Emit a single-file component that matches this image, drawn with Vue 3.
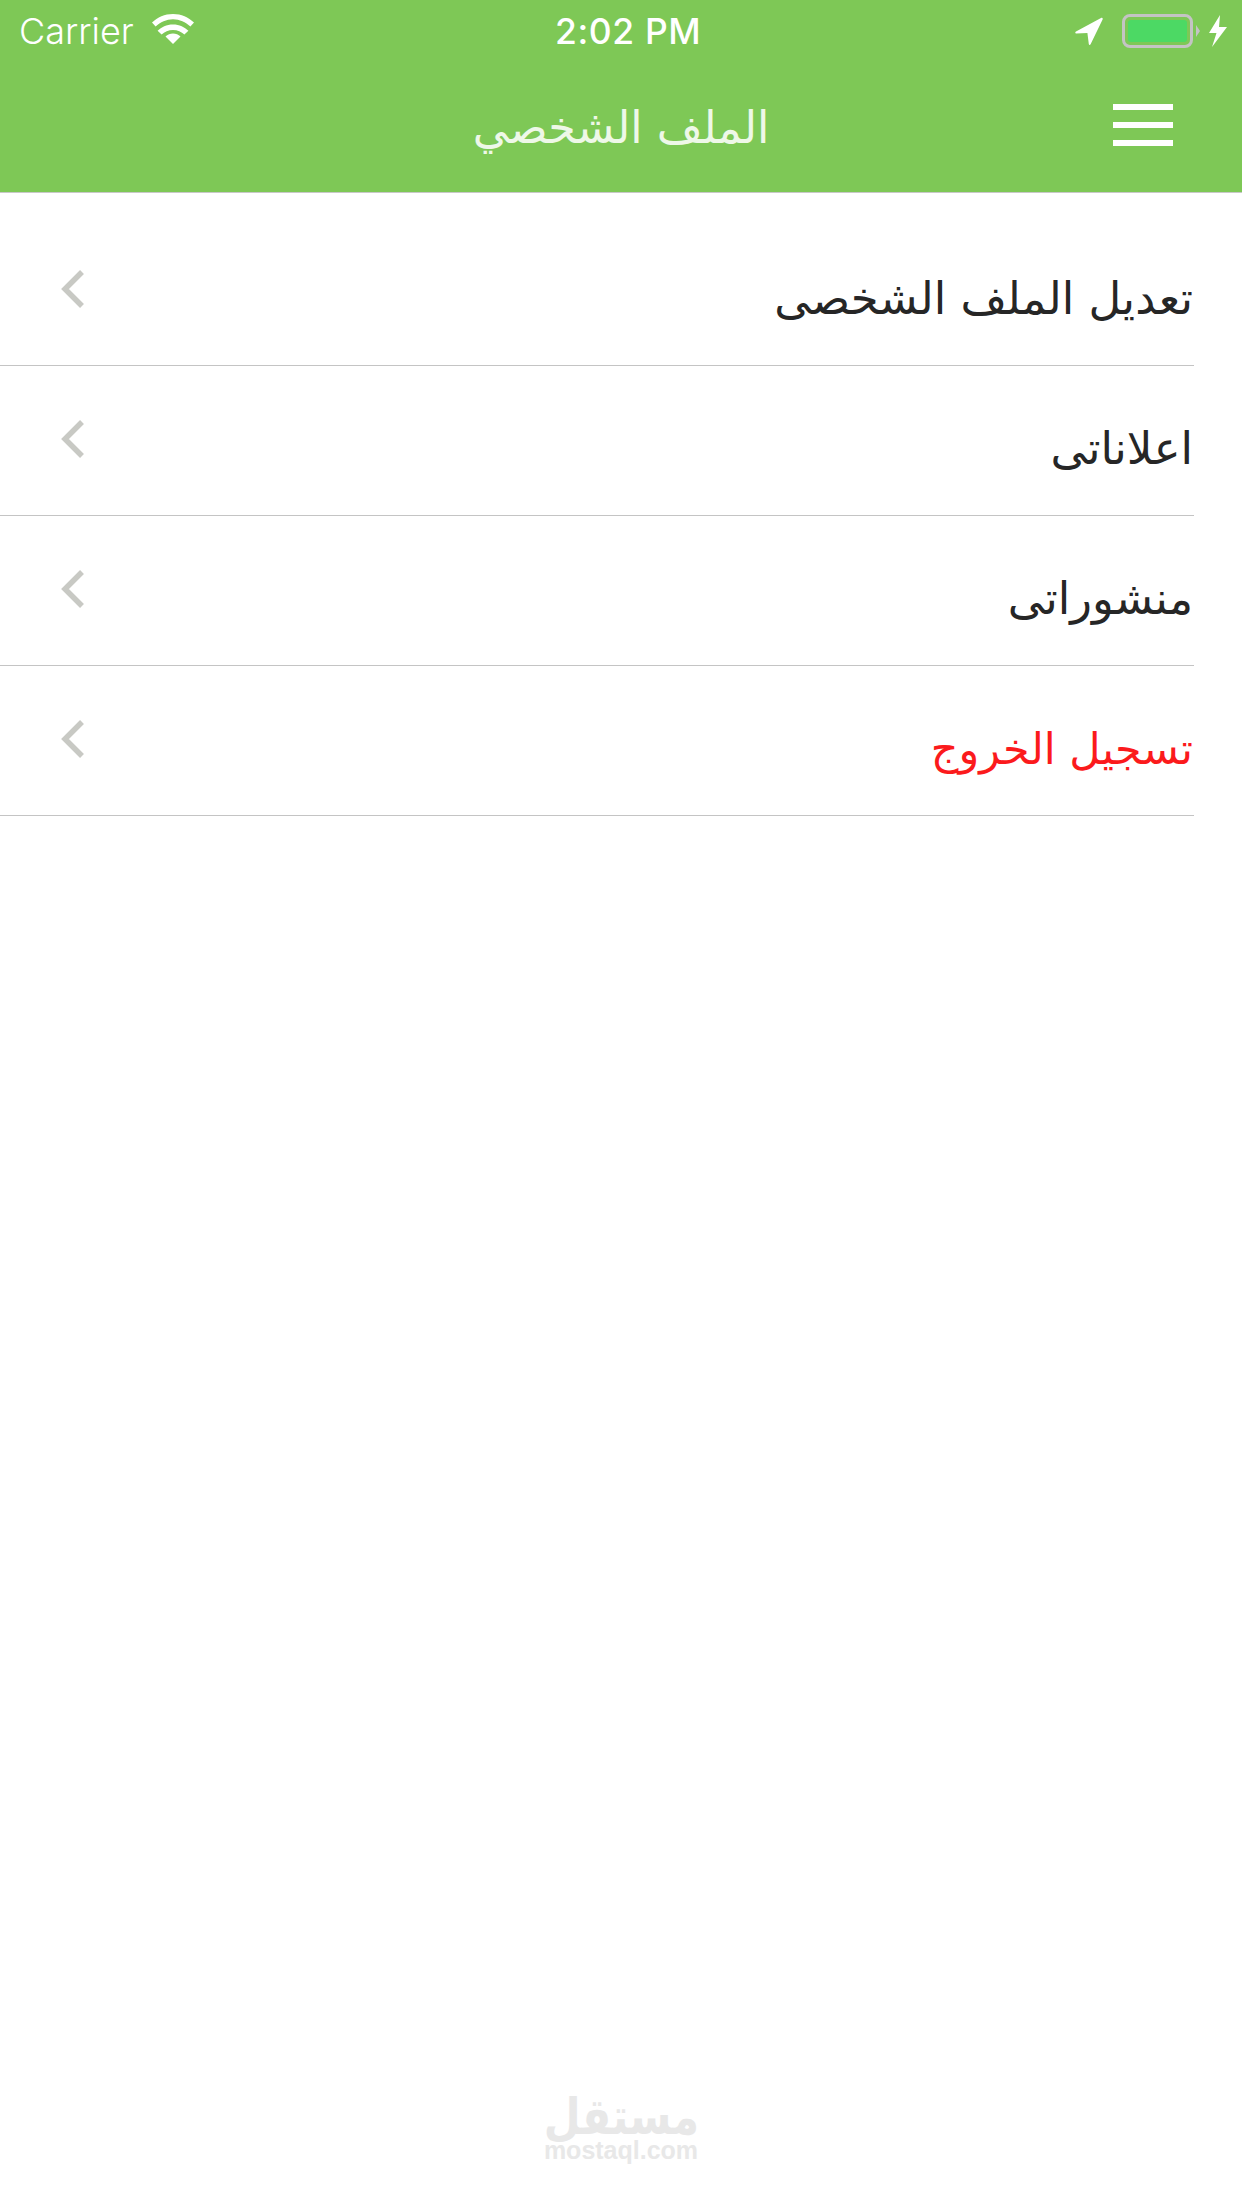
<script setup>
const rows = [
  { label: 'تعديل الملف الشخصى' },
  { label: 'اعلاناتى' },
  { label: 'منشوراتى' },
  { label: 'تسجيل الخروج', danger: true },
]
</script>

<template>
  <div class="screen">
    <header class="top">
      <div class="status">
        <div class="status-left">
          <span class="carrier">Carrier</span>
          <svg class="wifi" width="42" height="30" viewBox="0 0 42 30">
            <path d="M21 30 L13.5 22.5 C17.5 18.6 24.5 18.6 28.5 22.5 Z" fill="#fff" />
            <path d="M21 10.5 C14.4 10.5 9.6 13 5.6 16.8 L9.6 20.6 C12.6 17.8 16.4 16 21 16 C25.6 16 29.4 17.8 32.4 20.6 L36.4 16.8 C32.4 13 27.6 10.5 21 10.5 Z" fill="#fff" />
            <path d="M21 0 C12.6 0 5.6 3.2 0 8.6 L3.6 12.6 C8.4 8 14.4 5.2 21 5.2 C27.6 5.2 33.6 8 38.4 12.6 L42 8.6 C36.4 3.2 29.4 0 21 0 Z" fill="#fff" />
          </svg>
        </div>
        <span class="time">2:02 PM</span>
        <div class="status-right">
          <svg class="arrow" width="28" height="28" viewBox="0 0 28 28">
            <path d="M1 14.6 L26 1 C27.4 .4 28 1.2 27.6 2.6 L15.6 27.2 C15 28.2 14 28.2 13.8 27 L12.4 16 L1.2 16.6 C0 16.4 0 15.2 1 14.6 Z" fill="#fff" />
          </svg>
          <div class="battery">
            <div class="battery-fill"></div>
          </div>
          <span class="battery-tip"></span>
          <svg class="bolt" width="18" height="32" viewBox="0 0 18 32">
            <path d="M11 0 L0 18 L7.5 18 L3 32 L18 12 L10 12 Z" fill="#fff" />
          </svg>
        </div>
      </div>
      <div class="nav">
        <span class="title">الملف الشخصي</span>
        <div class="burger">
          <span></span>
          <span></span>
          <span></span>
        </div>
      </div>
    </header>

    <main class="list">
      <div v-for="row in rows" :key="row.label" class="row">
        <svg class="chevron" width="26" height="40" viewBox="0 0 26 40">
          <path d="M23 3 L6 20 L23 37" fill="none" stroke="#c8c9c4" stroke-width="5.5" />
        </svg>
        <span class="label" :class="{ danger: row.danger }" dir="rtl">{{ row.label }}</span>
      </div>
    </main>

    <footer class="mark">
      <span class="mark-ar" dir="rtl">مستقل</span>
      <span class="mark-en">mostaql.com</span>
    </footer>
  </div>
</template>

<style>
html,
body {
  margin: 0;
  background: #fff;
}
</style>

<style scoped>
.screen {
  width: 1242px;
  height: 2208px;
  display: flex;
  flex-direction: column;
  background: #fff;
  font-family: "DejaVu Sans", "Liberation Sans", sans-serif;
  overflow: hidden;
}

.top {
  height: 192px;
  background: #7ec856;
  border-bottom: 1px solid #c8c8c8;
  color: #fff;
}

.status {
  height: 62px;
  display: grid;
  grid-template-columns: 555px auto 1fr;
  align-items: center;
  font-family: Inter, Roboto, sans-serif;
}

.status-left {
  display: flex;
  align-items: center;
  padding-left: 19px;
}

.carrier {
  font-size: 36px;
  font-weight: 300;
}

.wifi {
  margin-left: 18px;
  margin-top: -4px;
}

.time {
  font-size: 35.5px;
  font-weight: 500;
  letter-spacing: .6px;
}

.status-right {
  display: flex;
  align-items: center;
  justify-content: flex-end;
  padding-right: 15px;
}

.arrow {
  margin-right: 19px;
}

.battery {
  width: 71px;
  height: 34px;
  box-sizing: border-box;
  border: 3px solid #c4c4c4;
  border-radius: 8px;
  padding: 3px;
}

.battery-fill {
  height: 100%;
  background: #4cd964;
  border-radius: 3px;
}

.battery-tip {
  width: 0;
  height: 0;
  margin-left: 3px;
  border-left: 4px solid #c4c4c4;
  border-top: 6px solid transparent;
  border-bottom: 6px solid transparent;
}

.bolt {
  margin-left: 9px;
}

.nav {
  height: 130px;
  display: flex;
  align-items: center;
  justify-content: center;
  position: relative;
}

.title {
  font-size: 44.5px;
  font-family: "DejaVu Sans ExtraLight", "DejaVu Sans", sans-serif;
  color: #eef8e8;
}

.burger {
  position: absolute;
  right: 69px;
  top: 42px;
  width: 60px;
  display: flex;
  flex-direction: column;
  gap: 12px;
}

.burger span {
  height: 6px;
  background: #fff;
}

.list {
  padding: 23px 48px 0 0;
}

.row {
  height: 149px;
  display: flex;
  align-items: center;
  justify-content: space-between;
  padding: 0 1px 0 59px;
  border-bottom: 1px solid #c4c4c4;
}

.chevron {
  margin-top: -3px;
}

.label {
  margin-top: 16px;
  font-size: 45px;
  font-family: "DejaVu Sans ExtraLight", "DejaVu Sans", sans-serif;
  color: #262626;
}

.label.danger {
  font-size: 43px;
  color: #fb1a1c;
}

.mark {
  margin-top: auto;
  padding-bottom: 47px;
  display: flex;
  flex-direction: column;
  align-items: center;
  color: #e8e8e8;
}

.mark-ar {
  font-size: 50px;
  font-weight: 700;
  line-height: 44px;
  transform: scaleX(.85);
}

.mark-en {
  font-family: "Liberation Sans", sans-serif;
  font-size: 25px;
  font-weight: 700;
  line-height: 22px;
}
</style>
